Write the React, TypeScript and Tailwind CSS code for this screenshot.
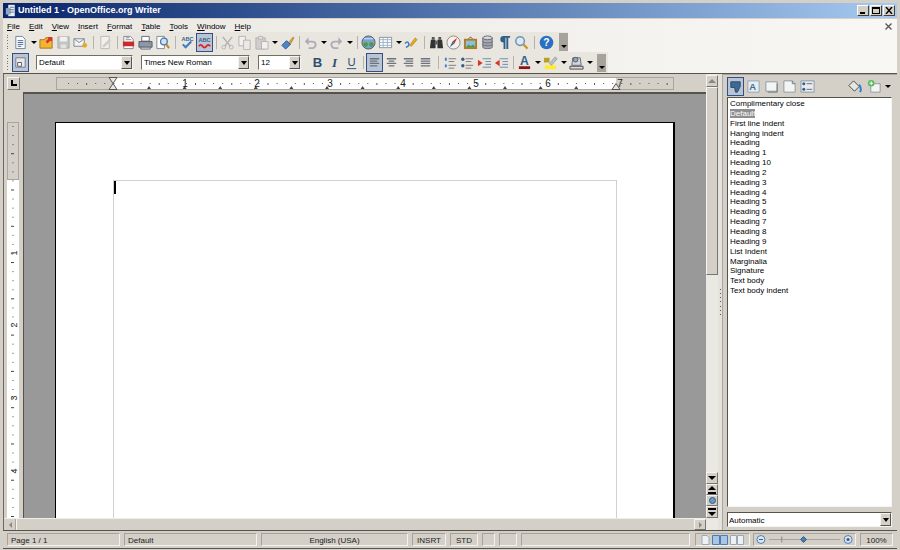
import type { ReactNode } from 'react';

const styleNames = ['Complimentary close', 'Default', 'First line indent', 'Hanging indent', 'Heading', 'Heading 1', 'Heading 10', 'Heading 2', 'Heading 3', 'Heading 4', 'Heading 5', 'Heading 6', 'Heading 7', 'Heading 8', 'Heading 9', 'List Indent', 'Marginalia', 'Signature', 'Text body', 'Text body indent'];
const menus = ['File', 'Edit', 'View', 'Insert', 'Format', 'Table', 'Tools', 'Window', 'Help'];

function Ico({ children, active, dim }: { children: ReactNode; active?: boolean; dim?: boolean }) {
  return (
    <div className={`flex h-[19px] w-[17px] shrink-0 items-center justify-center ${active ? 'border border-[#34507f] bg-[#b9c4d6]' : ''} ${dim ? 'opacity-40' : ''}`}>
      <svg width="15" height="15" viewBox="0 0 16 16" className="shrink-0">{children}</svg>
    </div>
  );
}

const Arrow = () => (
  <div className="flex w-[9px] shrink-0 items-center justify-center">
    <div className="border-x-[3px] border-t-[3px] border-x-transparent border-t-black" />
  </div>
);

const Sep = ({ narrow }: { narrow?: boolean }) => (
  <div className={`flex shrink-0 justify-center ${narrow ? 'w-[6px]' : 'w-[8px]'}`}>
    <div className="h-[13px] w-px bg-[#b5b3ab]" />
  </div>
);

const Grip = () => (
  <div className="flex h-[15px] w-[8px] shrink-0 flex-col justify-between pl-[3px]">
    {[0, 1, 2, 3, 4, 5].map((i) => <div key={i} className="h-px w-px bg-[#77756d]" />)}
  </div>
);

const Overflow = () => (
  <div className="flex h-[18px] w-[9px] shrink-0 items-end justify-center bg-[#a5a39c] pb-[3px]">
    <div className="border-x-[3px] border-t-[3px] border-x-transparent border-t-black" />
  </div>
);

const ArrowBtn = () => (
  <div className="flex h-[13px] w-[11px] shrink-0 items-center justify-center border border-b-[#555] border-l-[#f5f4f0] border-r-[#555] border-t-[#f5f4f0] bg-[#d4d0c8]">
    <div className="border-x-[3px] border-t-[4px] border-x-transparent border-t-black" />
  </div>
);

function Combo({ text, width }: { text: string; width: string }) {
  return (
    <div className={`flex h-[15px] shrink-0 items-center border border-b-[#f5f4f0] border-l-[#716f64] border-r-[#f5f4f0] border-t-[#716f64] bg-white pl-[2px] ${width}`}>
      <span className="flex-1 truncate pt-px">{text}</span>
      <ArrowBtn />
    </div>
  );
}

function Field({ children, className }: { children?: ReactNode; className: string }) {
  return (
    <div className={`flex h-[13px] shrink-0 items-center border border-b-[#f3f2ee] border-l-[#a5a39b] border-r-[#f3f2ee] border-t-[#a5a39b] ${className}`}>
      {children}
    </div>
  );
}

function ScrollBtn({ children, className }: { children: ReactNode; className?: string }) {
  return (
    <div className={`flex shrink-0 items-center justify-center border border-b-[#77756d] border-l-[#f5f4f0] border-r-[#77756d] border-t-[#f5f4f0] bg-[#d4d0c8] ${className ?? ''}`}>
      {children}
    </div>
  );
}

const pageLines = (
  <>
    <path d="M3 1.5h7l3 3v10H3z" fill="#fff" stroke="#6b7f99" />
    <path d="M5 6h6M5 8h6M5 10h6M5 12h4" stroke="#3f6a9c" />
  </>
);

function HRuler() {
  const dots = Array.from({ length: 69 }, (_, i) => i);
  const tabs = Array.from({ length: 13 }, (_, i) => 93 + i * 35.6);
  const nums = [129, 201, 274, 347, 420, 492, 564];
  return (
    <svg width="618" height="13" className="block">
      <rect x="0.5" y="0.5" width="617" height="12" fill="#d4d0c8" stroke="#a8a69e" />
      <rect x="57" y="1" width="503" height="11" fill="#fff" />
      {dots.map((i) => <rect key={i} x={12 + i * 9.07} y="6" width="1" height={i % 4 === 2 ? 2 : 1} fill="#555" />)}
      {tabs.map((x) => <path key={x} d={`M${x} 9l2 3h-4z`} fill="#444" />)}
      {nums.map((x, i) => <text key={x} x={x} y="10" fontSize="10" textAnchor="middle" fill="#222">{i + 1}</text>)}
      <path d="M53 0.5h8l-4 6zM53 12.5h8l-4-6z" fill="#e8e6e0" stroke="#555" />
      <path d="M556 12.5h8l-4-6z" fill="#e8e6e0" stroke="#555" />
    </svg>
  );
}

function VRuler() {
  const dots = Array.from({ length: 44 }, (_, i) => i);
  const nums = [131, 203, 276, 349];
  return (
    <svg width="12" height="396" className="block">
      <rect x="0.5" y="0.5" width="11" height="57" fill="#d4d0c8" stroke="#a8a69e" />
      <rect x="0" y="58" width="12" height="338" fill="#fff" />
      {dots.map((i) => <rect key={i} x={i % 4 === 3 ? 4 : 5.5} y={4 + i * 9.07} width={i % 4 === 3 ? 3 : 1} height="1" fill="#444" />)}
      {nums.map((y, i) => (
        <text key={y} x="6" y={y + 4} fontSize="9" textAnchor="middle" fill="#222" transform={`rotate(-90 6 ${y})`}>{i + 1}</text>
      ))}
    </svg>
  );
}

export default function App() {
  return (
    <div className="flex h-[550px] w-[900px] flex-col overflow-hidden bg-[#d4d0c8] px-[3px] pt-[3px] font-['Liberation_Sans',sans-serif] text-[8px] leading-none text-black">
      {/* title bar */}
      <div className="flex h-[15px] shrink-0 items-center bg-gradient-to-r from-[#0a246a] to-[#a6caf0] pl-[2px] pr-[2px]">
        <svg width="13" height="13" viewBox="0 0 16 16" className="mr-[0px]">
          <path d="M4 1h8v14H4z" fill="#e8eef5" />
          <path d="M1 5h6v8H1z" fill="#8fa6bf" />
          <path d="M6 4h5M6 7h5M6 10h5" stroke="#44607f" />
        </svg>
        <span className="flex-1 text-[9px] font-bold text-white">Untitled 1 - OpenOffice.org Writer</span>
        {['min', 'max', 'close'].map((b) => (
          <div key={b} className="ml-[1px] flex h-[11px] w-[12px] items-center justify-center border border-b-[#404040] border-l-white border-r-[#404040] border-t-white bg-[#d4d0c8]">
            {b === 'min' && <div className="mt-[5px] mr-[2px] h-[2px] w-[5px] bg-black" />}
            {b === 'max' && <div className="h-[7px] w-[8px] border border-t-2 border-black" />}
            {b === 'close' && (
              <svg width="8" height="7" viewBox="0 0 8 7"><path d="M1 0l6 7M7 0L1 7" stroke="#000" strokeWidth="1.4" /></svg>
            )}
          </div>
        ))}
      </div>

      {/* menu and toolbars */}
      <div className="mt-px flex h-[54px] shrink-0 flex-col bg-gradient-to-r from-[#ebe8e2] to-[#f8f7f4]">
        <div className="flex h-[13px] shrink-0 items-center pl-[4px] pr-[4px] pt-[2px]">
          {menus.map((m) => (
            <span key={m} className="mr-[9px]"><span className="underline">{m[0]}</span>{m.slice(1)}</span>
          ))}
          <svg width="7" height="7" viewBox="0 0 7 7" className="ml-auto mr-[1px]"><path d="M0.5 0.5l6 6M6.5 0.5l-6 6" stroke="#555" strokeWidth="1.3" /></svg>
        </div>

        <div className="flex h-[20px] w-[565px] shrink-0 items-center bg-[#e9e6e0] pl-[1px]">
          <Grip />
          <Ico>{pageLines}</Ico>
          <Arrow />
          <Ico>
            <path d="M1 5h5l1-2h7v11H1z" fill="#f2b632" stroke="#a8741a" />
            <path d="M9 2h5v5l-2-1-3 3-2-2 3-3z" fill="#d8352a" />
          </Ico>
          <Ico dim><path d="M2 2h12v12H2z" fill="#88939e" stroke="#555" /><path d="M4 2h8v5H4z" fill="#fff" /><path d="M5 10h6v4H5z" fill="#ddd" /></Ico>
          <Ico>
            <path d="M1 4h11v8H1z" fill="#f2f2f0" stroke="#7d8795" />
            <path d="M1 4l5.5 4L12 4" fill="none" stroke="#7d8795" />
            <circle cx="12.5" cy="11" r="2.5" fill="#e8a820" />
          </Ico>
          <Sep />
          <Ico dim><path d="M3 1.5h9v13H3z" fill="#fff" stroke="#777" /><path d="M5 11l7-7 2 2-7 7H5z" fill="#aaa" /></Ico>
          <Sep narrow />
          <Ico>
            <path d="M3 1.5h7l3 3v10H3z" fill="#fff" stroke="#7d8795" />
            <path d="M2 7h12v5H2z" fill="#c92a2a" />
            <path d="M5 3h4M5 5h6" stroke="#889" />
          </Ico>
          <Ico>
            <path d="M4 1.5h8v5H4z" fill="#fff" stroke="#667" />
            <path d="M1 7h14v6H1z" fill="#8d99a6" stroke="#556" />
            <path d="M3 13h10v2H3z" fill="#e5e5e2" stroke="#667" />
            <path d="M11 9h2" stroke="#49b04a" />
          </Ico>
          <Ico>
            <path d="M2 1.5h8v13H2z" fill="#fff" stroke="#7d8795" />
            <circle cx="9.5" cy="7" r="3.6" fill="#cfe3f5" stroke="#4a78a8" strokeWidth="1.4" />
            <path d="M12 10l3 4" stroke="#b88a2a" strokeWidth="2.2" />
          </Ico>
          <Sep />
          <Ico>
            <text x="8" y="6.5" fontSize="6" fontWeight="700" textAnchor="middle" fill="#3a5f8a">ABC</text>
            <path d="M3 10l3 3 6-6" fill="none" stroke="#3b7cc4" strokeWidth="2.2" />
          </Ico>
          <Ico active>
            <text x="8" y="7" fontSize="6" fontWeight="700" textAnchor="middle" fill="#3a5f8a">ABC</text>
            <path d="M2 12q2-3 4 0t4 0 4 0" fill="none" stroke="#d22" strokeWidth="2" />
          </Ico>
          <Sep narrow />
          <Ico dim><path d="M3 2l8 10M13 2L5 12" stroke="#667" strokeWidth="1.6" /><circle cx="4" cy="13" r="2" fill="none" stroke="#667" /><circle cx="12" cy="13" r="2" fill="none" stroke="#667" /></Ico>
          <Ico dim><path d="M2 1.5h7v10H2z" fill="#fff" stroke="#667" /><path d="M7 5.5h7v10H7z" fill="#eee" stroke="#667" /></Ico>
          <Ico dim><path d="M2 3h10v12H2z" fill="#aaa" stroke="#667" /><path d="M5 1.5h4v3H5z" fill="#eee" stroke="#667" /><path d="M8 7h7v8H8z" fill="#fff" stroke="#667" /></Ico>
          <Arrow />
          <Ico>
            <path d="M9 8l5-6 1 1-4 7z" fill="#d8a832" stroke="#8a6a1a" strokeWidth="0.5" />
            <path d="M2 11l5-5 4 4-5 5z" fill="#4f86c6" stroke="#2b5a92" />
          </Ico>
          <Sep narrow />
          <Ico dim><path d="M3 7h7a3.5 3.5 0 010 7H6" fill="none" stroke="#557" strokeWidth="2" /><path d="M6 2.5L2 7l4 4z" fill="#557" /></Ico>
          <Arrow />
          <Ico dim><path d="M13 7H6a3.5 3.5 0 000 7h4" fill="none" stroke="#557" strokeWidth="2" /><path d="M10 2.5L14 7l-4 4z" fill="#557" /></Ico>
          <Arrow />
          <Sep narrow />
          <Ico>
            <circle cx="8" cy="8" r="7" fill="#7aa4c8" stroke="#557" />
            <circle cx="5" cy="10" r="2.4" fill="#4a9a3f" />
            <circle cx="11" cy="10" r="2.4" fill="#4a9a3f" />
            <path d="M3 4h10" stroke="#dbe8f2" />
          </Ico>
          <Ico>
            <path d="M1.5 2.5h13v11h-13z" fill="#fff" stroke="#7d8fa5" />
            <path d="M1.5 5h13M1.5 8h13M1.5 11h13M5.5 2.5v11M10 2.5v11" stroke="#9fb1c6" />
          </Ico>
          <Arrow />
          <Ico>
            <path d="M6 11l6-8 2 2-6 7z" fill="#e8a820" stroke="#a06a10" strokeWidth="0.5" />
            <path d="M1 9q3-3 4 0t-3 4" fill="none" stroke="#3b7cc4" strokeWidth="1.6" />
          </Ico>
          <Sep />
          <Ico>
            <path d="M2 5h5v9H1zM9 5h5l1 9H9z" fill="#333" />
            <path d="M3 2h3v3H3zM10 2h3v3h-3zM7 6h2v4H7z" fill="#555" />
          </Ico>
          <Ico>
            <circle cx="8" cy="8" r="7" fill="#f3f1ea" stroke="#8d8a80" />
            <path d="M12 3L7 7l2 2z" fill="#d22" />
            <path d="M4 13l3-6 2 2z" fill="#2f6ab0" />
          </Ico>
          <Ico>
            <path d="M1 4h14v11H1z" fill="#b07a26" />
            <path d="M3 6h10v7H3z" fill="#8ec0dc" />
            <path d="M3 13l3-3 2 2 3-2 2 3z" fill="#4a9a3f" />
            <path d="M6 4l2-2 2 2" fill="none" stroke="#6b4a14" />
          </Ico>
          <Ico>
            <path d="M3 3v10c0 2 10 2 10 0V3z" fill="#a5aaae" stroke="#667" />
            <ellipse cx="8" cy="3" rx="5" ry="2" fill="#d5d8da" stroke="#667" />
            <path d="M3 7c0 2 10 2 10 0M3 10c0 2 10 2 10 0" fill="none" stroke="#667" />
          </Ico>
          <Ico><path d="M7 8a3.5 3.5 0 010-7h7v2h-2v12h-2V3H9v12H7z" fill="#2f5f8a" /></Ico>
          <Ico>
            <circle cx="6.5" cy="6.5" r="4.6" fill="#dce9f5" stroke="#6f93b8" strokeWidth="1.6" />
            <path d="M10 10l4.5 4.5" stroke="#c99a32" strokeWidth="2.4" />
          </Ico>
          <Sep />
          <Ico>
            <circle cx="8" cy="8" r="7.3" fill="#2a6fc2" />
            <text x="8" y="12" fontSize="11" fontWeight="700" textAnchor="middle" fill="#fff">?</text>
          </Ico>
          <div className="w-[4px] shrink-0" />
          <Overflow />
        </div>

        <div className="flex h-[21px] w-[605px] shrink-0 items-center bg-[#e9e6e0] pl-[1px]">
          <Grip />
          <Ico active>
            <path d="M3 3h10v10H3z" fill="#e8e8e6" stroke="#778" />
            <path d="M5 8h4v4H5z" fill="#fff" stroke="#556" />
          </Ico>
          <div className="w-[7px] shrink-0" />
          <Combo text="Default" width="w-[97px]" />
          <div className="w-[8px] shrink-0" />
          <Combo text="Times New Roman" width="w-[109px]" />
          <div className="w-[8px] shrink-0" />
          <Combo text="12" width="w-[43px]" />
          <div className="w-[8px] shrink-0" />
          <Ico><text x="8" y="13" fontSize="14" fontWeight="700" textAnchor="middle" fill="#2f4f6f" fontFamily="Liberation Sans">B</text></Ico>
          <Ico><text x="8" y="13" fontSize="14" fontStyle="italic" fontWeight="700" textAnchor="middle" fill="#2f4f6f" fontFamily="Liberation Serif">I</text></Ico>
          <Ico><text x="8" y="12" fontSize="12" textAnchor="middle" fill="#2f4f6f" fontFamily="Liberation Sans">U</text><path d="M3 14.5h10" stroke="#2f4f6f" /></Ico>
          <Sep narrow />
          <Ico active><path d="M3 4h10M3 6.5h8M3 9h10M3 11.5h8" stroke="#6c737a" strokeWidth="1.4" /></Ico>
          <Ico><path d="M3 4h10M5 6.5h6M3 9h10M5 11.5h6" stroke="#6c737a" strokeWidth="1.4" /></Ico>
          <Ico><path d="M3 4h10M5 6.5h8M3 9h10M5 11.5h8" stroke="#6c737a" strokeWidth="1.4" /></Ico>
          <Ico><path d="M3 4h10M3 6.5h10M3 9h10M3 11.5h10" stroke="#6c737a" strokeWidth="1.4" /></Ico>
          <Sep />
          <Ico><path d="M2 3h2v3H2zM2 10h2v3H2z" fill="#3b7cc4" /><path d="M6 4h8M6 7h6M6 11h8M6 14h6" stroke="#777" /></Ico>
          <Ico><circle cx="3" cy="4.5" r="1.8" fill="#2f5f8a" /><circle cx="3" cy="11.5" r="1.8" fill="#2f5f8a" /><path d="M6 4h8M6 7h6M6 11h8M6 14h6" stroke="#777" /></Ico>
          <Ico><path d="M6 4h9M9 7h6M9 10h6M6 13h9" stroke="#6a88a8" /><path d="M6 8.5L1 5v7z" fill="#d8352a" /></Ico>
          <Ico><path d="M6 4h9M9 7h6M9 10h6M6 13h9" stroke="#6a88a8" /><path d="M1 8.5L6 5v7z" fill="#d8352a" /></Ico>
          <Sep narrow />
          <Ico><text x="8" y="11" fontSize="13" fontWeight="700" textAnchor="middle" fill="#2f5f8a" fontFamily="Liberation Sans">A</text><path d="M2 12h12v3H2z" fill="#8f1414" /></Ico>
          <Arrow />
          <Ico><path d="M2 11h12v4H2z" fill="#ffee22" /><path d="M7 9l6-7 2 2-6 7z" fill="#b9c3cd" stroke="#667" strokeWidth="0.5" /><path d="M1 3h6v5H1z" fill="#b8a020" /></Ico>
          <Arrow />
          <Ico><path d="M1 12h14v3H1z" fill="#ddd" stroke="#444" /><path d="M4 3h8l1 8H3z" fill="#cfd6dc" stroke="#667" /><circle cx="7" cy="5" r="2.5" fill="#9aa6b2" stroke="#556" /></Ico>
          <Arrow />
          <div className="w-[3px] shrink-0" />
          <Overflow />
        </div>
      </div>

      {/* work area */}
      <div className="flex h-[457px] shrink-0 border-t border-[#55534c]">
        <div className="flex w-[715px] shrink-0 border-l border-r border-[#6b6960]">
          <div className="flex w-[702px] shrink-0 flex-col">
            <div className="flex h-[18px] shrink-0 items-center pl-[3px]">
              <ScrollBtn className="h-[13px] w-[13px]">
                <div className="h-[6px] w-[6px] border-b-2 border-l-2 border-black" />
              </ScrollBtn>
              <div className="ml-[36px]"><HRuler /></div>
            </div>
            <div className="flex min-h-0 flex-1">
              <div className="flex w-[19px] shrink-0 flex-col pl-[3px] pr-[4px] pt-[30px]">
                <VRuler />
              </div>
              <div className="min-h-0 flex-1 overflow-hidden border-l border-t-2 border-[#55534c] bg-[#999] pl-[31px] pt-[28px]">
                <div className="h-[420px] w-[620px] border-l border-r-2 border-t border-black bg-white pl-[57px] pt-[57px]">
                  <div className="h-[400px] w-[504px] border border-[#d0d0d0]">
                    <div className="h-[13px] w-[2px] bg-black" />
                  </div>
                </div>
              </div>
            </div>
            <div className="flex h-[12px] shrink-0 border-t border-[#efeeea] pl-[2px]">
              <div className="flex w-[10px] items-center justify-center border-r border-[#a8a69e]">
                <div className="border-y-[3px] border-r-[3px] border-y-transparent border-r-[#8a8880]" />
              </div>
              <div className="flex-1 border-l border-[#f5f4f0]" />
              <ScrollBtn className="h-[11px] w-[12px]">
                <div className="border-y-[3px] border-l-[3px] border-y-transparent border-l-[#8a8880]" />
              </ScrollBtn>
            </div>
          </div>
          <div className="flex w-[12px] shrink-0 flex-col bg-[#eae8e3] pb-[12px]">
            <ScrollBtn className="mt-[1px] h-[12px] w-[12px]">
              <div className="border-x-[4px] border-b-[4px] border-x-transparent border-b-[#8a8880]" />
            </ScrollBtn>
            <div className="h-[188px] shrink-0 border border-b-[#77756d] border-l-[#f5f4f0] border-r-[#77756d] border-t-[#f5f4f0] bg-[#d4d0c8]" />
            <div className="flex-1" />
            <ScrollBtn className="h-[12px] w-[12px]"><div className="border-x-[4px] border-t-[4px] border-x-transparent border-t-black" /></ScrollBtn>
            <ScrollBtn className="h-[11px] w-[12px]"><svg width="8" height="8" viewBox="0 0 8 8"><path d="M4 0l4 4H0zM0 6h8v2H0z" fill="#000" /></svg></ScrollBtn>
            <ScrollBtn className="h-[11px] w-[12px]"><div className="h-[7px] w-[7px] rounded-full border border-[#2f5f8a] bg-[#6f97c4]" /></ScrollBtn>
            <ScrollBtn className="h-[12px] w-[12px]"><svg width="8" height="8" viewBox="0 0 8 8"><path d="M0 0h8v2H0zM4 8L0 4h8z" fill="#000" /></svg></ScrollBtn>
          </div>
        </div>

        {/* splitter */}
        <div className="flex w-[4px] shrink-0 items-center justify-center bg-[#e4e2dc]">
          <div className="flex h-[26px] flex-col justify-between">
            {[0, 1, 2, 3, 4, 5, 6].map((i) => <div key={i} className="h-px w-px bg-[#55534c]" />)}
          </div>
        </div>

        {/* styles panel */}
        <div className="flex min-w-0 flex-1 flex-col border-l border-t border-[#a8a69e] pb-[3px] pl-[4px] pr-[5px]">
          <div className="flex h-[22px] shrink-0 items-center">
            <Ico active>
              <path d="M3 3h10v5l-3 6H8l-1-5H3z" fill="#3d6a93" stroke="#2b4a68" />
            </Ico>
            <div className="w-[1px] shrink-0" />
            <Ico><path d="M2 2h12v12H2z" fill="#e8edf2" stroke="#8fa3b8" /><text x="7" y="12" fontSize="10" fontWeight="700" textAnchor="middle" fill="#3d6a93" fontFamily="Liberation Sans">A</text></Ico>
            <div className="w-[1px] shrink-0" />
            <Ico><path d="M2 3h12v10H2z" fill="#f4f4f2" stroke="#8a97a5" /><path d="M14 5v9H4" fill="none" stroke="#6a7885" /></Ico>
            <div className="w-[1px] shrink-0" />
            <Ico><path d="M2 2h9l3 3v9H2z" fill="#f4f4f2" stroke="#8a97a5" /><path d="M11 2v3h3" fill="none" stroke="#6a7885" /></Ico>
            <div className="w-[1px] shrink-0" />
            <Ico><path d="M1 2h14v12H1z" fill="#e9ecef" stroke="#8a97a5" /><circle cx="4" cy="5" r="1.6" fill="#2f5f8a" /><circle cx="4" cy="11" r="1.6" fill="#2f5f8a" /><path d="M7 5h6M7 11h6" stroke="#667" /></Ico>
            <div className="flex-1" />
            <Ico>
              <path d="M2 7l5-5 6 6-5 5z" fill="#e8e6e0" stroke="#444" />
              <path d="M13 6c2 3 2 6 1 8" fill="none" stroke="#2a7fc9" strokeWidth="2" />
            </Ico>
            <div className="w-[3px] shrink-0" />
            <Ico>
              <path d="M4 5h10v9H4z" fill="#f4f4f2" stroke="#8a97a5" />
              <circle cx="4.5" cy="4.5" r="3.5" fill="#5cb85c" />
              <path d="M2.5 4.5h4M4.5 2.5v4" stroke="#fff" />
            </Ico>
            <Arrow />
          </div>
          <div className="min-h-0 flex-1 border border-b-[#f5f4f0] border-l-[#55534c] border-r-[#f5f4f0] border-t-[#55534c] bg-white px-[2px] pt-px leading-[9.85px]">
            {styleNames.map((s) => (
              <div key={s} className="h-[9.85px] whitespace-nowrap">
                <span className={s === 'Default' ? 'bg-[#8f8f8f] text-white' : ''}>{s}</span>
              </div>
            ))}
          </div>
          <div className="mt-[5px] flex h-[15px] shrink-0 items-center border border-b-[#f5f4f0] border-l-[#55534c] border-r-[#f5f4f0] border-t-[#55534c] bg-white pl-[1px]">
            <span className="flex-1 pt-[2px]">Automatic</span>
            <ArrowBtn />
          </div>
        </div>
      </div>

      {/* status bar */}
      <div className="flex h-[19px] shrink-0 items-center border-b border-t border-b-[#55534c] border-t-[#55534c] pl-[4px] text-[#222]">
        <Field className="w-[113px] pl-[3px] pt-[2px]">Page 1 / 1</Field>
        <Field className="ml-[4px] w-[133px] pl-[3px] pt-[2px]">Default</Field>
        <Field className="ml-[4px] w-[147px] justify-center pt-[2px]">English (USA)</Field>
        <Field className="ml-[4px] w-[34px] justify-center pt-[2px]">INSRT</Field>
        <Field className="ml-[4px] w-[28px] justify-center pt-[2px]">STD</Field>
        <Field className="ml-[4px] w-[13px]" />
        <Field className="ml-[4px] w-[18px]" />
        <Field className="ml-[4px] w-[169px]" />
        <Field className="ml-[5px] w-[55px] justify-center gap-[2px]">
          <svg width="9" height="10" viewBox="0 0 9 10"><path d="M1 0.5h5l2 2v7H1z" fill="#eef1f4" stroke="#9aa8b6" /></svg>
          <svg width="16" height="10" viewBox="0 0 16 10"><path d="M0.5 0.5h7v9h-7zM8.5 0.5h7v9h-7z" fill="#a9c4e4" stroke="#4d7cb0" /></svg>
          <svg width="14" height="10" viewBox="0 0 14 10"><path d="M0.5 0.5h6v9h-6zM7.5 0.5h6v9h-6z" fill="#eef1f4" stroke="#9aa8b6" /></svg>
        </Field>
        <Field className="ml-[3px] w-[103px] items-center pl-[2px]">
          <svg width="100" height="11" viewBox="0 0 100 11">
            <circle cx="5" cy="5.5" r="4" fill="#dde6ef" stroke="#4d7cb0" />
            <path d="M3 5.5h4" stroke="#2f5f8a" />
            <path d="M13 5.5h72" stroke="#a5a39b" />
            <path d="M26 2.5v6" stroke="#8a8880" />
            <path d="M48 2.5l3 3-3 3-3-3z" fill="#4d7cb0" stroke="#2f5f8a" />
            <circle cx="93" cy="5.5" r="4" fill="#dde6ef" stroke="#4d7cb0" />
            <circle cx="93" cy="5.5" r="1.6" fill="#2f5f8a" />
          </svg>
        </Field>
        <Field className="ml-[4px] w-[33px] justify-center pt-[2px]">100%</Field>
      </div>
    </div>
  );
}
